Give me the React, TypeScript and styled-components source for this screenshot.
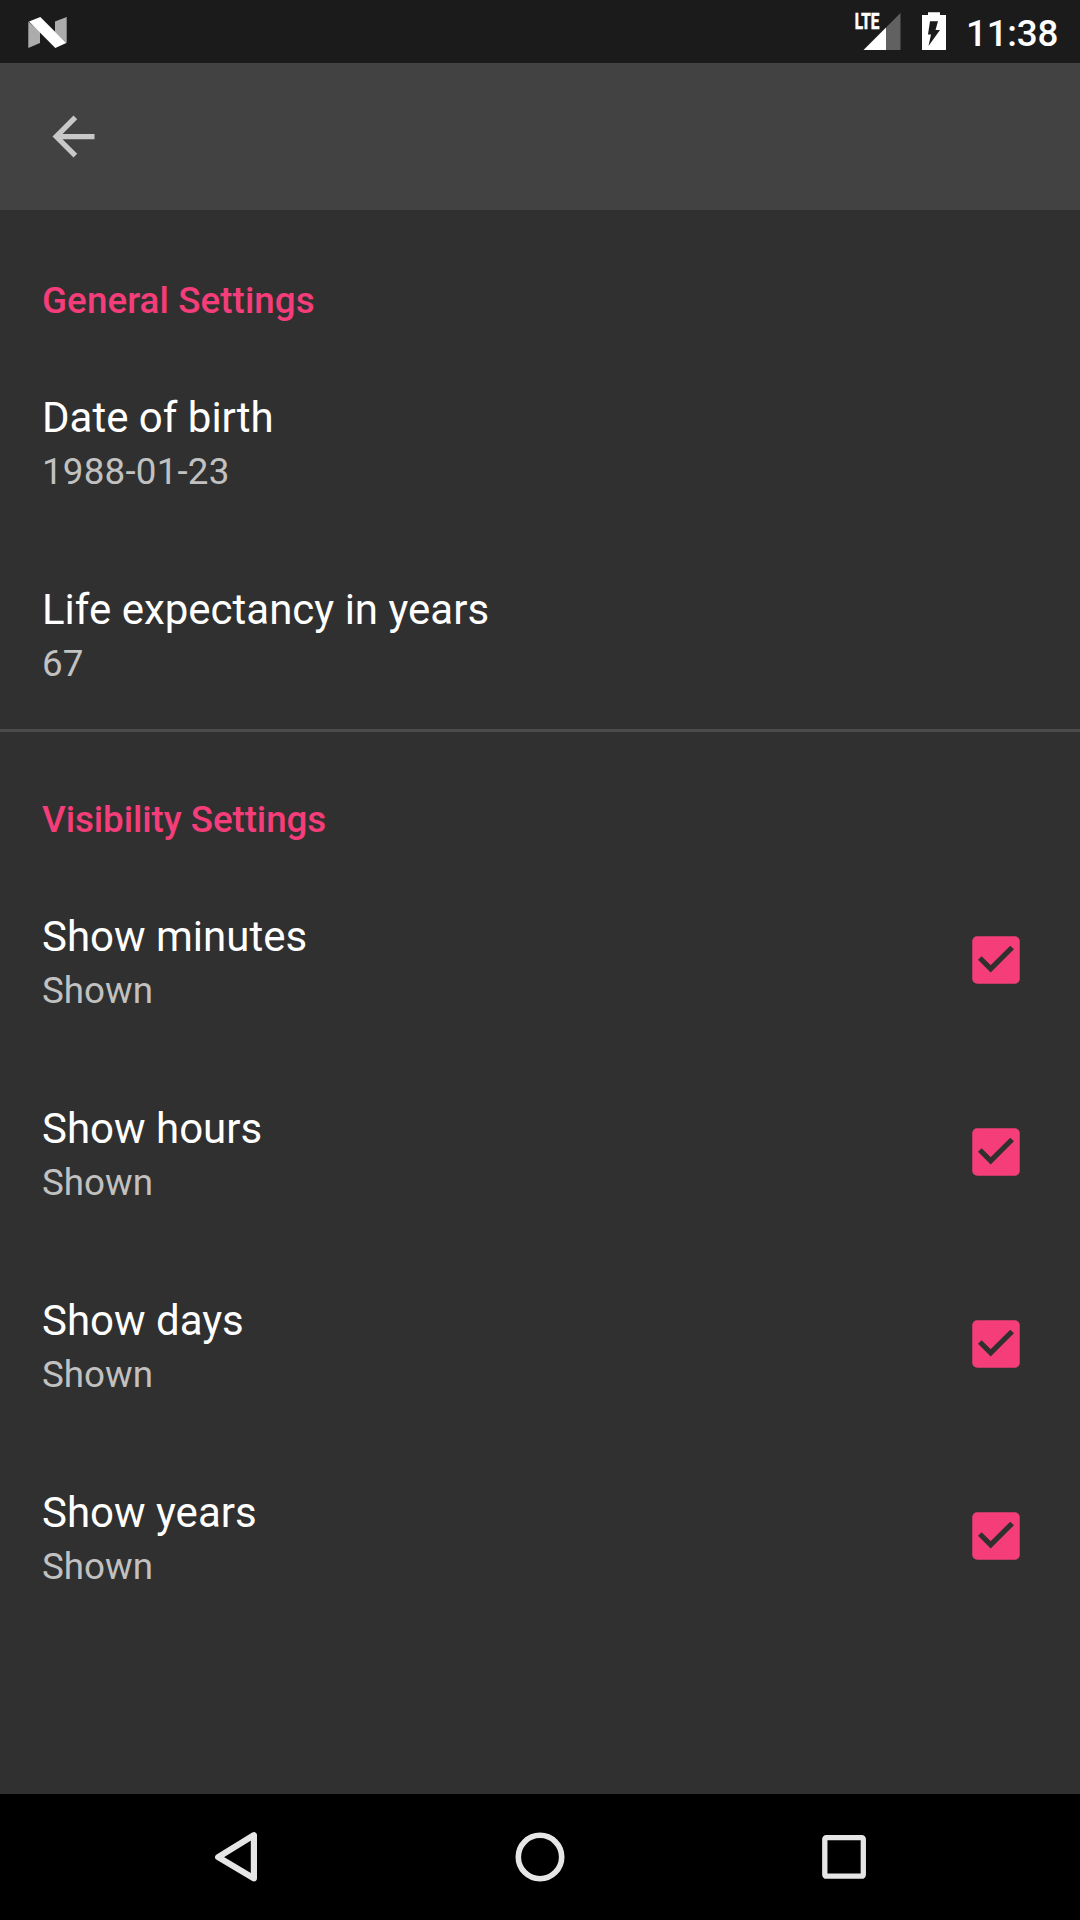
import React from 'react';
import styled, { createGlobalStyle } from 'styled-components';

const Global = createGlobalStyle`
  * { box-sizing: border-box; }
  body { margin: 0; background: #303030; font-family: Roboto, "Liberation Sans", sans-serif; }
`;
const Screen = styled.div`
  display: flex; flex-direction: column; width: 1080px; height: 1920px; overflow: hidden; background: #303030;
`;
const StatusBar = styled.header`
  display: flex; align-items: center; height: 63px; padding: 0 22px 0 27px; background: #1b1b1b; flex: none;
`;
const StatusIcons = styled.div`
  display: flex; align-items: center; margin-left: auto;
`;
const Clock = styled.span`
  width: 92px; margin-left: 20px; padding-top: 4px; text-align: right; white-space: nowrap;
  font-size: 36.75px; font-weight: 500; line-height: 60px; letter-spacing: -0.2px; color: #fff;
`;
const SignalSvg = styled.svg`
  overflow: visible;
`;
const BatterySvg = styled.svg`
  margin-left: 20px;
`;
const Toolbar = styled.nav`
  display: flex; align-items: center; height: 147px; padding-left: 42px; background: #424242; flex: none;
`;
const IconButton = styled.button`
  display: flex; padding: 0; border: 0; background: none;
`;
const Content = styled.main`
  flex: 1;
`;
const Section = styled.section<{ $divided?: boolean }>`
  padding-top: ${p => (p.$divided ? '69px' : '66px')};
  border-bottom: ${p => (p.$divided ? '3px solid #4b4b4b' : '0')};
`;
const Heading = styled.h2<{ $tracking: number }>`
  margin: 0; padding: 0 42px; height: 66px; font-size: 36.75px; line-height: 43px; font-weight: 500; color: #f43d79;
  letter-spacing: ${p => p.$tracking}px;
`;
const Row = styled.div`
  display: flex; align-items: center; justify-content: space-between; height: 192px; padding: 0 60px 0 42px;
`;
const Labels = styled.div`
  padding-top: 4px;
`;
const Title = styled.div`
  font-size: 42px; line-height: 57px; color: #fff;
`;
const Summary = styled.div<{ $tracking: number }>`
  font-size: 36.75px; line-height: 51px; color: #c1c1c1; letter-spacing: ${p => p.$tracking}px;
`;
const NavBar = styled.footer`
  display: flex; align-items: center; justify-content: space-between; height: 126px; padding: 0 206px; background: #000; flex: none;
`;

const NougatIcon = () => (
  <svg width="42" height="34" viewBox="27 14 42 34">
    <path d="M28.300 20.500L40 31V42L28.300 47zM55 20.500L66.700 16V42L55 31z" fill="#acacac" />
    <path d="M29 20.500L40.300 16 66.300 42 55.300 47z" fill="#fff" />
  </svg>
);

const SignalIcon = () => (
  <SignalSvg width="50" height="40" viewBox="852 12 50 40">
    <path d="M886 27.500L900.500 13V50H886z" fill="#616161" />
    <path d="M863.500 50L886 27.500V50z" fill="#fff" />
    <text x="854.800" y="29.200" fill="#fff" stroke="#fff" strokeWidth="0.700" fontSize="22.500" fontWeight="700" textLength="24.600" lengthAdjust="spacingAndGlyphs">LTE</text>
  </SignalSvg>
);

const BatteryIcon = () => (
  <BatterySvg width="24" height="40" viewBox="922 12 24 40">
    <path d="M928 12.300H940V15H946V50H922V15H928z" fill="#fff" />
    <path d="M930 21.300H938L935.500 30H940L928.500 46 931 34.500H928z" fill="#1b1b1b" />
  </BatterySvg>
);

const BackArrow = () => (
  <svg width="63" height="63" viewBox="0 0 24 24">
    <path d="M20 11H7.830l5.590-5.590L12 4l-8 8 8 8 1.410-1.410L7.830 13H20z" fill="#c8c8c8" />
  </svg>
);

const Check = () => (
  <svg width="48" height="48" viewBox="0 0 48 48">
    <rect x="0.250" y="0.250" width="47.500" height="47.500" rx="5" fill="#f43d79" />
    <path d="M7.800 22L18.700 32.900 40.100 11.500" fill="none" stroke="#303030" strokeWidth="5.200" />
  </svg>
);

type ItemProps = { title: string; summary: string; checked?: boolean; tracking?: number };

const Item = ({ title, summary, checked, tracking = 0 }: ItemProps) => (
  <Row>
    <Labels>
      <Title>{title}</Title>
      <Summary $tracking={tracking}>{summary}</Summary>
    </Labels>
    {checked && <Check />}
  </Row>
);

export default function App() {
  return (
    <Screen>
      <Global />
      <StatusBar>
        <NougatIcon />
        <StatusIcons>
          <SignalIcon />
          <BatteryIcon />
          <Clock>11:38</Clock>
        </StatusIcons>
      </StatusBar>
      <Toolbar>
        <IconButton aria-label="Back"><BackArrow /></IconButton>
      </Toolbar>
      <Content>
        <Section $divided>
          <Heading $tracking={0.08}>General Settings</Heading>
          <Item title="Date of birth" summary="1988-01-23" tracking={0.2} />
          <Item title="Life expectancy in years" summary="67" />
        </Section>
        <Section>
          <Heading $tracking={-0.07}>Visibility Settings</Heading>
          {['minutes', 'hours', 'days', 'years'].map(unit => (
            <Item key={unit} title={'Show ' + unit} summary="Shown" checked />
          ))}
        </Section>
      </Content>
      <NavBar>
        <IconButton aria-label="Back">
          <svg width="60" height="60" viewBox="206 1827 60 60">
            <path d="M253.900 1835.200V1878.300L218.200 1857.200z" fill="none" stroke="#e6e6e6" strokeWidth="6.200" strokeLinejoin="round" />
          </svg>
        </IconButton>
        <IconButton aria-label="Home">
          <svg width="60" height="60" viewBox="0 0 60 60">
            <circle cx="30" cy="30" r="21.700" fill="none" stroke="#e6e6e6" strokeWidth="5.600" />
          </svg>
        </IconButton>
        <IconButton aria-label="Recents">
          <svg width="60" height="60" viewBox="814 1827 60 60">
            <rect x="824.800" y="1837.700" width="38.500" height="38.500" rx="1.500" fill="none" stroke="#e6e6e6" strokeWidth="5.300" />
          </svg>
        </IconButton>
      </NavBar>
    </Screen>
  );
}
